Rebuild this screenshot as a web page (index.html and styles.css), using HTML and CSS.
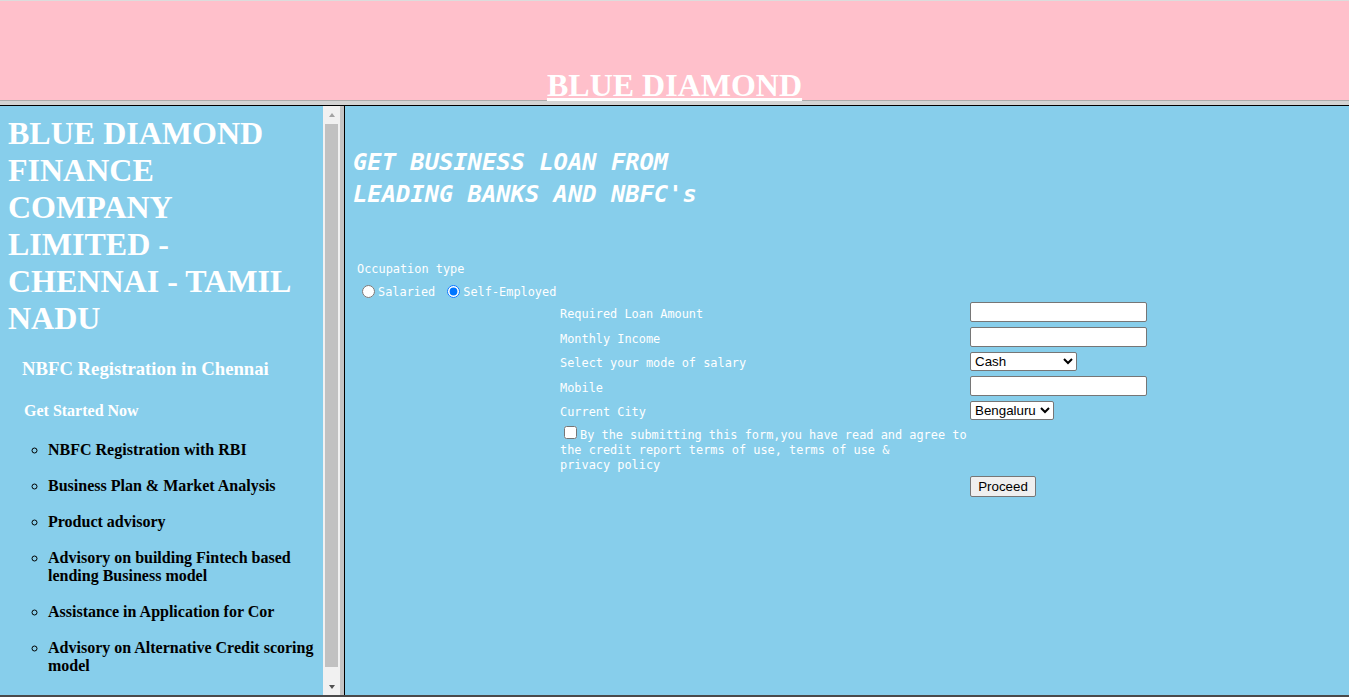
FILE: index.html
```html
<!DOCTYPE html>
<html lang="en">
<head>
<meta charset="utf-8">
<title>Blue Diamond</title>
<link rel="stylesheet" href="styles.css">
</head>
<body>
<header class="banner">
  <h1 class="brand"><a href="#" class="brand-link">BLUE DIAMOND</a></h1>
</header>
<div class="hsplit"></div>
<div class="frames">
  <aside class="sidebar">
    <div class="sidebar-content">
      <h1 class="company">BLUE DIAMOND FINANCE COMPANY LIMITED - CHENNAI - TAMIL NADU</h1>
      <h3 class="reg-title">NBFC Registration in Chennai</h3>
      <h4 class="started">Get Started Now</h4>
      <ul class="services">
        <li>NBFC Registration with RBI</li>
        <li>Business Plan &amp; Market Analysis</li>
        <li>Product advisory</li>
        <li>Advisory on building Fintech based lending Business model</li>
        <li>Assistance in Application for Cor</li>
        <li>Advisory on Alternative Credit scoring model</li>
      </ul>
    </div>
    <div class="scrollbar">
      <div class="sb-btn"><span class="arrow-up"></span></div>
      <div class="sb-track"><div class="sb-thumb"></div></div>
      <div class="sb-btn"><span class="arrow-down"></span></div>
    </div>
  </aside>
  <div class="vsplit"></div>
  <main class="content">
    <h2 class="promo">GET BUSINESS LOAN FROM<br>LEADING BANKS AND NBFC's</h2>
    <form class="loan-form">
      <p class="occ-label">Occupation type</p>
      <div class="occ-options">
        <label class="choice"><input type="radio" name="occ" class="radio">Salaried</label>
        <label class="choice"><input type="radio" name="occ" class="radio" checked>Self-Employed</label>
      </div>
      <div class="fields">
        <label class="field-label">Required Loan Amount</label>
        <div class="field-ctrl"><input type="text" class="text-input"></div>
        <label class="field-label">Monthly Income</label>
        <div class="field-ctrl"><input type="text" class="text-input"></div>
        <label class="field-label">Select your mode of salary</label>
        <div class="field-ctrl">
          <select class="select select-salary">
            <option>Cash</option>
            <option>Cheque</option>
            <option>Bank Transfer</option>
          </select>
        </div>
        <label class="field-label">Mobile</label>
        <div class="field-ctrl"><input type="text" class="text-input"></div>
        <label class="field-label">Current City</label>
        <div class="field-ctrl">
          <select class="select select-city">
            <option>Bengaluru</option>
            <option>Chennai</option>
            <option>Mumbai</option>
          </select>
        </div>
        <p class="consent"><input type="checkbox" class="check">By the submitting this form,you have read and agree to<br>the credit report terms of use, terms of use &amp;<br>privacy policy</p>
        <div class="field-ctrl submit-cell"><button type="button" class="proceed">Proceed</button></div>
      </div>
    </form>
  </main>
</div>
</body>
</html>
```

FILE: styles.css
```css
html, body {
  margin: 0;
  padding: 0;
}

body {
  width: 1349px;
  height: 697px;
  overflow: hidden;
  font-family: "Liberation Serif", "Times New Roman", serif;
  background: #ffffff;
}

/* top frame */
.banner {
  box-sizing: border-box;
  height: 100px;
  border-top: 1px solid #dcdcdc;
  background: #ffc0cb;
  padding-top: 70px;
}

.brand {
  margin: 0;
  text-align: center;
  font-size: 32px;
  line-height: 28px;
  font-weight: bold;
}

.brand-link {
  color: #ffffff;
  text-decoration: underline;
}

/* frame border between top and lower frames */
.hsplit {
  height: 4px;
  background: #d3d3d3;
  border-top: 1px solid #ababab;
  border-bottom: 1px solid #000000;
}

.frames {
  box-sizing: border-box;
  height: 591px;
  display: flex;
  border-bottom: 2px solid #4a4a4a;
}

/* left frame */
.sidebar {
  width: 340px;
  flex: 0 0 340px;
  display: flex;
  background: #87ceeb;
}

.sidebar-content {
  width: 323px;
  flex: 0 0 323px;
  overflow: hidden;
  padding-top: 9px;
  box-sizing: border-box;
}

.company {
  margin: 0;
  padding: 0 8px;
  font-size: 32px;
  line-height: 37px;
  font-weight: bold;
  color: #ffffff;
}

.reg-title {
  margin: 21px 0 0;
  padding-left: 22px;
  font-size: 18.72px;
  line-height: 21.5px;
  font-weight: bold;
  color: #ffffff;
}

.started {
  margin: 22px 0 0;
  padding-left: 24px;
  font-size: 16px;
  line-height: 18px;
  font-weight: bold;
  color: #ffffff;
}

.services {
  margin: 21px 0 0;
  padding-left: 48px;
  padding-right: 8px;
  list-style: circle;
  font-size: 16px;
  line-height: 18px;
  font-weight: bold;
  color: #000000;
}

.services li {
  margin-bottom: 18px;
}

/* scrollbar of the left frame */
.scrollbar {
  width: 17px;
  flex: 0 0 17px;
  display: flex;
  flex-direction: column;
  background: #f1f1f1;
}

.sb-btn {
  height: 17px;
  flex: 0 0 17px;
  display: flex;
  align-items: center;
  justify-content: center;
}

.arrow-up {
  width: 0;
  height: 0;
  border-left: 3.5px solid transparent;
  border-right: 3.5px solid transparent;
  border-bottom: 4px solid #a3a3a3;
}

.arrow-down {
  width: 0;
  height: 0;
  border-left: 3.5px solid transparent;
  border-right: 3.5px solid transparent;
  border-top: 4px solid #505050;
}

.sb-track {
  flex: 1;
  display: flex;
  flex-direction: column;
}

.sb-thumb {
  margin: 1px 2px 0;
  height: 543px;
  background: #c1c1c1;
}

.vsplit {
  width: 4px;
  flex: 0 0 4px;
  background: #c4c4c4;
}

/* right frame */
.content {
  flex: 1;
  background: #87ceeb;
  border-left: 1px solid #000000;
  padding-left: 8px;
  overflow: hidden;
}

.promo {
  margin: 41px 0 0;
  font-family: "DejaVu Sans Mono", "Liberation Mono", monospace;
  font-size: 23.8px;
  line-height: 31.5px;
  font-weight: bold;
  font-style: italic;
  color: #ffffff;
}

.loan-form {
  margin: 0;
  font-family: "DejaVu Sans Mono", "Liberation Mono", monospace;
  font-size: 11.9px;
  line-height: 15px;
  color: #ffffff;
}

.occ-label {
  margin: 52px 0 0 4px;
}

.occ-options {
  margin: 8px 0 0 4px;
  display: flex;
  gap: 7px;
}

.choice {
  display: flex;
  align-items: flex-start;
}

.radio {
  width: 13px;
  height: 13px;
  margin: 0 3px 0 5px;
}

.fields {
  margin: 2px 0 0 207px;
  display: grid;
  grid-template-columns: 410px auto;
  row-gap: 5px;
  align-items: center;
}

.field-label {
  display: block;
  padding-top: 4px;
}

.field-ctrl {
  display: flex;
}

.text-input {
  box-sizing: border-box;
  width: 177px;
  height: 20px;
  margin: 0;
  padding: 1px 2px;
  border: 1px solid #767676;
  border-radius: 2px;
  background: #ffffff;
  font-family: "Liberation Sans", Arial, sans-serif;
  font-size: 13.333px;
}

.select {
  box-sizing: border-box;
  height: 19px;
  margin: 0;
  font-family: "Liberation Sans", Arial, sans-serif;
  font-size: 13.333px;
  color: #000000;
  background: #ffffff;
  border: 1px solid #767676;
  border-radius: 2px;
}

.select-salary {
  width: 107px;
}

.select-city {
  width: 84px;
}

.consent {
  grid-column: 1;
  grid-row: 6;
  margin: 1px 0 0;
  align-self: start;
}

.check {
  width: 13px;
  height: 13px;
  margin: 0 3px 0 4px;
  vertical-align: baseline;
}

.submit-cell {
  grid-column: 2;
  grid-row: 7;
  margin-top: -2px;
}

.proceed {
  box-sizing: border-box;
  width: 66px;
  height: 21px;
  margin: 0;
  padding: 1px 6px;
  font-family: "Liberation Sans", Arial, sans-serif;
  font-size: 13.333px;
  color: #000000;
  background: #efefef;
  border: 1px solid #767676;
  border-radius: 2px;
}
```
